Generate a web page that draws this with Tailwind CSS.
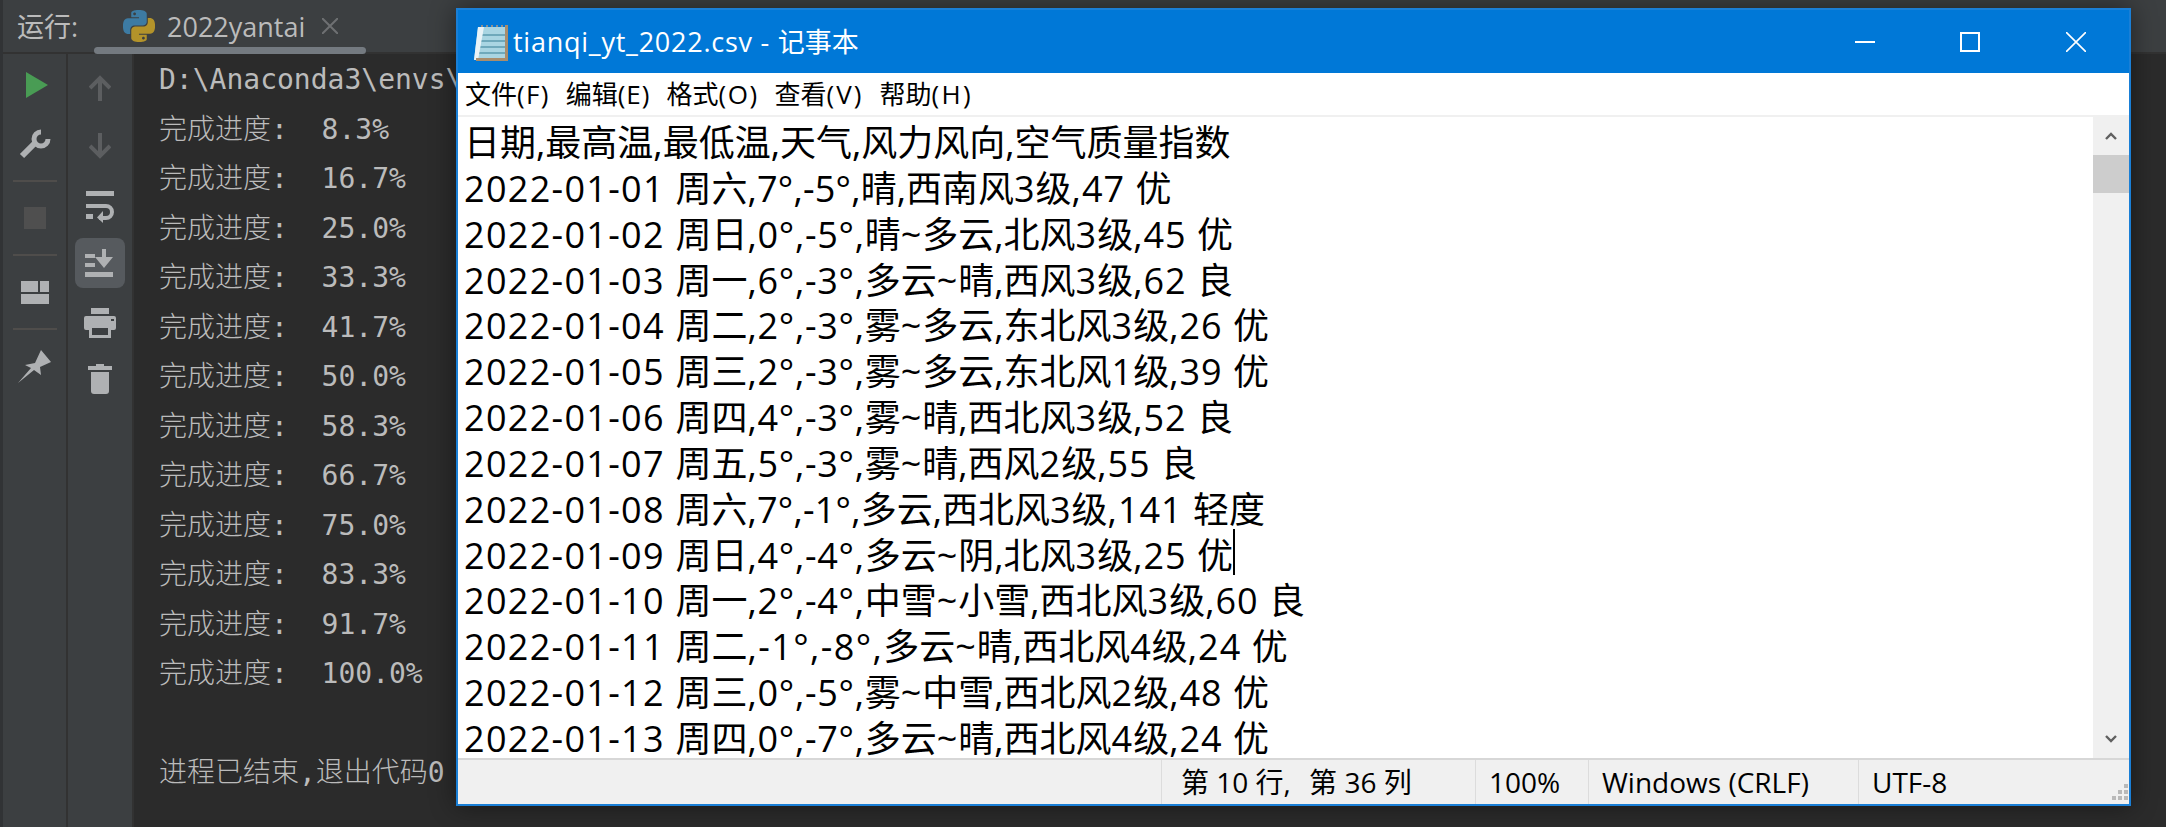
<!DOCTYPE html>
<html lang="zh">
<head>
  <meta charset="UTF-8" />
  <title>tianqi_yt_2022.csv</title>
  <script src="https://cdn.jsdelivr.net/npm/@tailwindcss/browser@4"></script>
</head>
<body class="bg-[#2b2b2b]">
  <div class="relative w-[2166px] h-[827px] overflow-hidden flex flex-col bg-[#2b2b2b] border-l-[3px] border-[#313335]">

    <!-- run tool window header -->
    <div class="relative h-[54px] shrink-0 flex items-center bg-[#3c3f41] border-b-2 border-[#323232] text-[#bbbbbb] font-['Open_Sans','Noto_Sans_CJK_SC',sans-serif]">
      <span class="ml-[14px] w-[106px] text-[27px] leading-none">运行:</span>
      <svg class="w-[32px] h-[32px]" viewBox="0 0 24 24">
        <path fill="#3d7ba3" d="M14.25.18l.9.2.73.26.59.3.45.32.34.34.25.34.16.33.1.3.04.26.02.2-.01.13V8.5l-.05.63-.13.55-.21.46-.26.38-.3.31-.33.25-.35.19-.35.14-.33.1-.3.07-.26.04-.21.02H8.77l-.69.05-.59.14-.5.22-.41.27-.33.32-.27.35-.2.36-.15.37-.1.35-.07.32-.04.27-.02.21v3.06H3.17l-.21-.03-.28-.07-.32-.12-.35-.18-.36-.26-.36-.36-.35-.46-.32-.59-.28-.73-.21-.88-.14-1.05-.05-1.23.06-1.22.16-1.04.24-.87.32-.71.36-.57.4-.44.42-.33.42-.24.4-.16.36-.1.32-.05.24-.01h.16l.06.01h8.16v-.83H6.18l-.01-2.75-.02-.37.05-.34.11-.31.17-.28.25-.26.31-.23.38-.2.44-.18.51-.15.58-.12.64-.1.71-.06.77-.04.84-.02 1.27.05zm-6.3 1.98l-.23.33-.08.41.08.41.23.34.33.22.41.09.41-.09.33-.22.23-.34.08-.41-.08-.41-.23-.33-.33-.22-.41-.09-.41.09z"/>
        <path fill="#b3932a" d="M21.04 6.11l.28.06.32.12.35.18.36.27.36.35.35.47.32.59.28.73.21.88.14 1.04.05 1.23-.06 1.23-.16 1.04-.24.86-.32.71-.36.57-.4.45-.42.33-.42.24-.4.16-.36.09-.32.05-.24.02-.16-.01h-8.22v.82h5.84l.01 2.76.02.36-.05.34-.11.31-.17.29-.25.25-.31.24-.38.2-.44.17-.51.15-.58.13-.64.09-.71.07-.77.04-.84.01-1.27-.04-1.07-.14-.9-.2-.73-.25-.59-.3-.45-.33-.34-.34-.25-.34-.16-.33-.1-.3-.04-.25-.02-.2.01-.13v-5.34l.05-.64.13-.54.21-.46.26-.38.3-.32.33-.24.35-.2.35-.14.33-.1.3-.06.26-.04.21-.02.13-.01h5.84l.69-.05.59-.14.5-.21.41-.28.33-.32.27-.35.2-.36.15-.36.1-.35.07-.32.04-.28.02-.21V6.07h2.09l.14.01zm-6.47 14.25l-.23.33-.08.41.08.41.23.33.33.23.41.08.41-.08.33-.23.23-.33.08-.41-.08-.41-.23-.33-.33-.23-.41-.08-.41.08z"/>
      </svg>
      <span class="ml-[12px] text-[27px] leading-none">2022yantai</span>
      <svg class="ml-[17px] w-[16px] h-[16px]" viewBox="0 0 16 16" stroke="#6e7072" stroke-width="2"><path d="M0 0L16 16M16 0L0 16"/></svg>
      <!-- tab underline, sits on the header border -->
      <div class="absolute left-[91px] bottom-[-2px] w-[272px] h-[7px] rounded-full bg-[#747a80]"></div>
    </div>

    <div class="flex-1 flex min-h-0">
      <!-- left toolbar -->
      <div class="w-[63px] shrink-0 flex flex-col items-center bg-[#3c3f41] border-r-2 border-[#323232] box-content">
        <svg class="mt-[18px] ml-[4px] w-[22px] h-[26px]" viewBox="0 0 22 26"><path fill="#499c54" d="M0 0L22 13L0 26Z"/></svg>
        <svg class="mt-[31px] w-[32px] h-[30px]" viewBox="0 0 32 30" fill="none" stroke="#afb1b3"><path stroke-width="6" d="M3 27L16 14"/><path stroke-width="5" d="M22 3A7 7 0 1 0 29 10"/></svg>
        <div class="mt-[21px] w-[44px] h-[2px] bg-[#4f4d4b]"></div>
        <div class="mt-[25px] w-[22px] h-[22px] bg-[#4f4f4f]"></div>
        <div class="mt-[25px] w-[44px] h-[2px] bg-[#4f4d4b]"></div>
        <svg class="mt-[25px] w-[28px] h-[23px]" viewBox="0 0 28 23" fill="#afb1b3"><rect width="17" height="11"/><rect x="19" width="9" height="11"/><rect y="13" width="28" height="10"/></svg>
        <div class="mt-[24px] w-[44px] h-[2px] bg-[#4f4d4b]"></div>
        <svg class="mt-[20px] w-[33px] h-[33px]" viewBox="0 0 33 33"><path fill="#afb1b3" d="M0 33L13 18L7 15L17 13L23 0L33 12L22 17L23 25L16 20Z"/></svg>
      </div>

      <!-- right toolbar -->
      <div class="w-[64px] shrink-0 flex flex-col items-center bg-[#3c3f41] border-r-2 border-[#323232] box-content">
        <svg class="mt-[21px] w-[22px] h-[26px]" viewBox="0 0 22 26" fill="none" stroke="#5c5e60" stroke-width="4"><path d="M11 26V3M1 13L11 3L21 13"/></svg>
        <svg class="mt-[32px] w-[22px] h-[26px]" viewBox="0 0 22 26" fill="none" stroke="#5c5e60" stroke-width="4"><path d="M11 0V23M1 13L11 23L21 13"/></svg>
        <svg class="mt-[32px] w-[30px] h-[32px]" viewBox="0 0 30 32" fill="none" stroke="#afb1b3"><path stroke-width="5" d="M1 2.5H29"/><path stroke-width="4" d="M1 15H21A6 6 0 0 1 21 27H14"/><path stroke-width="5" d="M1 25.5H8"/><path fill="#afb1b3" stroke="none" d="M18 20L12 26.5L18 32Z"/></svg>
        <div class="mt-[15px] w-[50px] h-[50px] rounded-[8px] bg-[#565a5e] flex items-center justify-center">
          <svg class="w-[30px] h-[28px]" viewBox="0 0 30 28" fill="#afb1b3"><rect y="5" width="10" height="4"/><rect y="14" width="10" height="4"/><rect y="23" width="28" height="5"/><path d="M17 0H21V8H28L19 19L10 8H17Z"/></svg>
        </div>
        <svg class="mt-[20px] w-[32px] h-[30px]" viewBox="0 0 32 30" fill="#afb1b3"><rect x="7" width="18" height="6"/><path fill-rule="evenodd" d="M2 8H30A2 2 0 0 1 32 10V20A2 2 0 0 1 30 22H27V30H5V22H2A2 2 0 0 1 0 20V10A2 2 0 0 1 2 8ZM8 20V27H24V20Z"/><rect x="27" y="11" width="3" height="2" fill="#3c3f41"/></svg>
        <svg class="mt-[26px] w-[24px] h-[30px]" viewBox="0 0 24 30" fill="#afb1b3"><path d="M8 0H16V2H24V6H0V2H8Z"/><path d="M3 8H21V27A3 3 0 0 1 18 30H6A3 3 0 0 1 3 27Z"/></svg>
      </div>

      <!-- console output -->
      <div class="flex-1 pl-[25px] pt-px text-[#bbbbbb] text-[28px] font-light leading-[49.5px] font-['DejaVu_Sans_Mono','Noto_Sans_CJK_SC',monospace]">
        <div>D:\Anaconda3\envs\</div>
        <div>完成进度:&nbsp;&nbsp;8.3%</div>
        <div>完成进度:&nbsp;&nbsp;16.7%</div>
        <div>完成进度:&nbsp;&nbsp;25.0%</div>
        <div>完成进度:&nbsp;&nbsp;33.3%</div>
        <div>完成进度:&nbsp;&nbsp;41.7%</div>
        <div>完成进度:&nbsp;&nbsp;50.0%</div>
        <div>完成进度:&nbsp;&nbsp;58.3%</div>
        <div>完成进度:&nbsp;&nbsp;66.7%</div>
        <div>完成进度:&nbsp;&nbsp;75.0%</div>
        <div>完成进度:&nbsp;&nbsp;83.3%</div>
        <div>完成进度:&nbsp;&nbsp;91.7%</div>
        <div>完成进度:&nbsp;&nbsp;100.0%</div>
        <div>&nbsp;</div>
        <div>进程已结束,退出代码0</div>
      </div>
    </div>

    <!-- notepad window -->
    <div class="absolute left-[453px] top-[8px] w-[1675px] h-[798px] flex flex-col bg-white border-2 border-[#1a7fd6] shadow-[0_0_24px_rgba(0,0,0,0.45)] text-black font-['Open_Sans','Noto_Sans_CJK_SC',sans-serif]">
      <div class="h-[63px] shrink-0 flex items-center bg-[#0078d7] text-white">
        <svg class="ml-[16px] w-[34px] h-[38px]" viewBox="0 0 34 38">
          <path fill="#a9d5e2" d="M4 4H33V37H0Z"/>
          <path fill="none" stroke="#6fa9bb" stroke-width="2" d="M6 12H31M5 18H31M4 24H31M3 30H31"/>
          <path fill="#e9f3f7" d="M4 4H10L4 37H0Z"/>
          <path fill="#a98d6c" d="M31 2H34V38H2V35H31Z"/>
          <path fill="none" stroke="#8a8f92" stroke-width="2" stroke-dasharray="2 3" d="M7 3H32"/>
        </svg>
        <span class="ml-[5px] text-[27px] leading-none"><span class="tracking-[.75px]">tianqi_yt_2022.csv - </span>记事本</span>
        <div class="ml-auto mr-[43px] flex items-center gap-[85px]">
          <div class="w-[20px] h-[2px] bg-white"></div>
          <div class="w-[20px] h-[20px] border-2 border-white"></div>
          <svg class="ml-[1px] w-[20px] h-[20px]" viewBox="0 0 20 20" stroke="#fff" stroke-width="1.6"><path d="M0 0L20 20M20 0L0 20"/></svg>
        </div>
      </div>
      <div class="h-[44px] shrink-0 flex items-center gap-[16px] pl-[7px] border-b-2 border-[#f0f0f0] text-[26px]">
        <span>文件<span class="tracking-[1.3px]">(F)</span></span><span>编辑<span class="tracking-[1px]">(E)</span></span><span>格式<span class="tracking-[1.5px]">(O)</span></span><span>查看<span class="tracking-[2px]">(V)</span></span><span>帮助<span class="tracking-[2.3px]">(H)</span></span>
      </div>

      <div class="flex-1 min-h-0 flex">
        <div class="flex-1 overflow-hidden pl-[6px] pt-[3px] text-[36px] leading-[45.85px] whitespace-nowrap">
          <div>日期,最高温,最低温,天气,风力风向,空气质量指数</div>
          <div><span class="tracking-[1.3px]">2022-01-01 </span>周六<span class="tracking-[.2px]">,7°,-5°,</span>晴,西南风<span class="tracking-[1px]">3</span>级<span class="tracking-[1px]">,47 </span>优</div>
          <div><span class="tracking-[1.3px]">2022-01-02 </span>周日<span class="tracking-[.7px]">,0°,-5°,</span>晴<span class="tracking-[1px]">~</span>多云,北风<span class="tracking-[1px]">3</span>级<span class="tracking-[1px]">,45 </span>优</div>
          <div><span class="tracking-[1.3px]">2022-01-03 </span>周一<span class="tracking-[.7px]">,6°,-3°,</span>多云<span class="tracking-[1px]">~</span>晴,西风<span class="tracking-[1px]">3</span>级<span class="tracking-[1px]">,62 </span>良</div>
          <div><span class="tracking-[1.3px]">2022-01-04 </span>周二<span class="tracking-[.7px]">,2°,-3°,</span>雾<span class="tracking-[1px]">~</span>多云,东北风<span class="tracking-[1px]">3</span>级<span class="tracking-[1px]">,26 </span>优</div>
          <div><span class="tracking-[1.3px]">2022-01-05 </span>周三<span class="tracking-[.7px]">,2°,-3°,</span>雾<span class="tracking-[1px]">~</span>多云,东北风<span class="tracking-[1px]">1</span>级<span class="tracking-[1px]">,39 </span>优</div>
          <div><span class="tracking-[1.3px]">2022-01-06 </span>周四<span class="tracking-[.7px]">,4°,-3°,</span>雾<span class="tracking-[1px]">~</span>晴,西北风<span class="tracking-[1px]">3</span>级<span class="tracking-[1px]">,52 </span>良</div>
          <div><span class="tracking-[1.3px]">2022-01-07 </span>周五<span class="tracking-[.7px]">,5°,-3°,</span>雾<span class="tracking-[1px]">~</span>晴,西风<span class="tracking-[1px]">2</span>级<span class="tracking-[1px]">,55 </span>良</div>
          <div><span class="tracking-[1.3px]">2022-01-08 </span>周六<span class="tracking-[.2px]">,7°,-1°,</span>多云,西北风<span class="tracking-[1px]">3</span>级<span class="tracking-[1px]">,141 </span>轻度</div>
          <div><span class="tracking-[1.3px]">2022-01-09 </span>周日<span class="tracking-[.7px]">,4°,-4°,</span>多云<span class="tracking-[1px]">~</span>阴,北风<span class="tracking-[1px]">3</span>级<span class="tracking-[1px]">,25 </span>优<span class="relative"><span class="absolute left-0 top-[-2px] w-[2px] h-[46px] bg-black"></span></span></div>
          <div><span class="tracking-[1.3px]">2022-01-10 </span>周一<span class="tracking-[.7px]">,2°,-4°,</span>中雪<span class="tracking-[1px]">~</span>小雪,西北风<span class="tracking-[1px]">3</span>级<span class="tracking-[1px]">,60 </span>良</div>
          <div><span class="tracking-[1.3px]">2022-01-11 </span>周二<span class="tracking-[1.4px]">,-1°,-8°,</span>多云<span class="tracking-[1px]">~</span>晴,西北风<span class="tracking-[1px]">4</span>级<span class="tracking-[1px]">,24 </span>优</div>
          <div><span class="tracking-[1.3px]">2022-01-12 </span>周三<span class="tracking-[.7px]">,0°,-5°,</span>雾<span class="tracking-[1px]">~</span>中雪,西北风<span class="tracking-[1px]">2</span>级<span class="tracking-[1px]">,48 </span>优</div>
          <div><span class="tracking-[1.3px]">2022-01-13 </span>周四<span class="tracking-[.7px]">,0°,-7°,</span>多云<span class="tracking-[1px]">~</span>晴,西北风<span class="tracking-[1px]">4</span>级<span class="tracking-[1px]">,24 </span>优</div>
        </div>
        <!-- scrollbar -->
        <div class="w-[36px] shrink-0 flex flex-col bg-[#f0f0f0]">
          <div class="h-[38px] flex items-center justify-center">
            <svg class="w-[12px] h-[8px]" viewBox="0 0 12 8" fill="none" stroke="#606060" stroke-width="2.4"><path d="M1 7L6 2L11 7"/></svg>
          </div>
          <div class="h-[38px] bg-[#cdcdcd]"></div>
          <div class="mt-auto h-[38px] flex items-center justify-center">
            <svg class="w-[12px] h-[8px]" viewBox="0 0 12 8" fill="none" stroke="#606060" stroke-width="2.4"><path d="M1 1L6 6L11 1"/></svg>
          </div>
        </div>
      </div>

      <!-- status bar -->
      <div class="relative h-[46px] shrink-0 flex bg-[#f0f0f0] border-t-2 border-[#d7d7d7] text-[28px] leading-[44px]">
        <div class="w-[703px] shrink-0"></div>
        <div class="w-[314px] shrink-0 pl-[19px] border-l border-[#dcdcdc]">第 10 行<span class="mr-[11px]">,</span> 第 36 列</div>
        <div class="w-[113px] shrink-0 pl-[13px] border-l border-[#dcdcdc]">100%</div>
        <div class="w-[270px] shrink-0 pl-[13px] border-l border-[#dcdcdc]">Windows (CRLF)</div>
        <div class="pl-[13px] border-l border-[#dcdcdc]">UTF-8</div>
        <svg class="absolute right-0 bottom-[2px] w-[18px] h-[18px]" viewBox="0 0 18 18" fill="#b9b9b9"><rect x="13" width="4" height="4"/><rect x="7" y="6" width="4" height="4"/><rect x="13" y="6" width="4" height="4"/><rect x="1" y="12" width="4" height="4"/><rect x="7" y="12" width="4" height="4"/><rect x="13" y="12" width="4" height="4"/></svg>
      </div>
    </div>
  </div>
</body>
</html>
